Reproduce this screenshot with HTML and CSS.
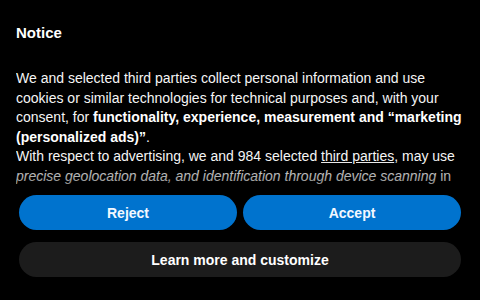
FILE: index.html
```html
<!DOCTYPE html>
<html lang="en">
<head>
<meta charset="utf-8">
<title>Notice</title>
<link rel="stylesheet" href="styles.css">
</head>
<body>
<div class="banner">
  <h1 class="title">Notice</h1>
  <div class="content">
    <p class="text">We and selected third parties collect personal information and use cookies or similar technologies for technical purposes and, with your consent, for <b>functionality, experience, measurement and “marketing (personalized ads)”</b>.<br>With respect to advertising, we and 984 selected <a class="link" href="#">third parties</a>, may use <i>precise geolocation data, and identification through device scanning</i> in</p>
  </div>
  <div class="actions">
    <div class="row">
      <button class="btn btn-primary">Reject</button>
      <button class="btn btn-primary">Accept</button>
    </div>
    <button class="btn btn-dark">Learn more and customize</button>
  </div>
</div>
</body>
</html>
```
FILE: styles.css
```css
html, body {
  margin: 0;
  padding: 0;
  background: #000;
}
body {
  width: 480px;
  height: 300px;
  overflow: hidden;
  font-family: "Liberation Sans", Arial, sans-serif;
  color: #f5f5f5;
}
.banner {
  padding: 23px 16px 0 16px;
}
.title {
  margin: 0;
  font-size: 15px;
  line-height: 20px;
  font-weight: 700;
  color: #fff;
}
.content {
  position: relative;
  margin-top: 26px;
  height: 117px;
  overflow: hidden;
}
.content::after {
  content: "";
  position: absolute;
  left: 0;
  right: 0;
  bottom: 0;
  height: 26px;
  background: linear-gradient(to bottom, rgba(0,0,0,0), rgba(0,0,0,0.45));
}
.text {
  margin: 0;
  font-size: 14px;
  line-height: 19.5px;
}
.text b {
  font-weight: 700;
  color: #fff;
}
.link {
  color: inherit;
  text-decoration: underline;
}
.actions {
  margin: 9px 3px 0 3px;
  display: flex;
  flex-direction: column;
  gap: 12px;
}
.row {
  display: flex;
  gap: 6px;
}
.btn {
  height: 35px;
  border: 0;
  border-radius: 18px;
  font-family: "Liberation Sans", Arial, sans-serif;
  font-size: 14px;
  font-weight: 700;
  color: #f3f8ff;
  cursor: pointer;
  padding: 0;
}
.row .btn {
  flex: 1 1 0;
}
.btn-primary {
  background: #0073ce;
}
.btn-dark {
  flex: none;
  width: 100%;
  background: #1c1c1c;
  color: #fff;
}
```
